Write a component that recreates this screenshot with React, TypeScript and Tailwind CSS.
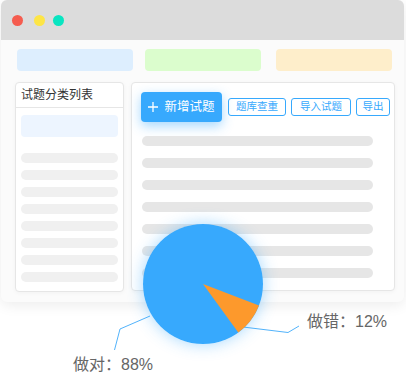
import React from "react";

const font = { fontFamily: '"Liberation Sans", "Noto Sans CJK SC", sans-serif' };

export default function App() {
  const leftBars = [0, 1, 2, 3, 4, 5, 6, 7];
  const rightBars = [0, 1, 2, 3, 4, 5, 6];
  return (
    <div className="relative w-[406px] h-[374px] bg-white overflow-hidden" style={font}>
      <div className="ml-[1px] w-[403px] h-[302px] rounded-[6px] bg-[#fbfbfb] shadow-[0_3px_14px_rgba(0,0,0,0.08)] overflow-hidden flex flex-col">
        <div className="h-[40px] bg-[#dcdcdc] flex items-center shrink-0">
          <div className="ml-[11px] w-[11px] h-[11px] rounded-full bg-[#f55c4f]" />
          <div className="ml-[11px] w-[11px] h-[11px] rounded-full bg-[#fde546]" />
          <div className="ml-[8px] w-[11px] h-[11px] rounded-full bg-[#09e5c1]" />
        </div>
        <div className="pl-[16px] pt-[9px] flex">
          <div className="w-[116px] h-[22px] rounded-[4px] bg-[#ddeefe]" />
          <div className="ml-[12px] w-[116px] h-[22px] rounded-[4px] bg-[#dbfdcd]" />
          <div className="ml-[15px] w-[116px] h-[22px] rounded-[4px] bg-[#feeecb]" />
        </div>
        <div className="pl-[14px] mt-[11px] flex gap-[7px]">
          <div className="w-[109px] h-[210px] rounded-[4px] border border-[#e6e6e6] bg-white shadow-[0_1px_4px_rgba(0,0,0,0.04)] flex flex-col">
            <div className="h-[25px] border-b border-[#e6e6e6] flex items-center pl-[5px] text-[12px] text-[#333]">
              试题分类列表
            </div>
            <div className="px-[5px] pt-[7px] flex flex-col">
              <div className="h-[22px] rounded-[4px] bg-[#edf5ff]" />
              <div className="mt-[16px] flex flex-col gap-[7px]">
                {leftBars.map((i) => (
                  <div key={i} className="h-[10px] rounded-full bg-[#f0f0f0]" />
                ))}
              </div>
            </div>
          </div>
          <div className="w-[264px] h-[209px] rounded-[4px] border border-[#e6e6e6] bg-white shadow-[0_1px_4px_rgba(0,0,0,0.04)] pl-[9px] pt-[9px]">
            <div className="flex items-center">
              <div className="w-[81px] h-[30px] rounded-[4px] bg-[#37a9fd] shadow-[0_4px_12px_rgba(55,169,253,0.45)] flex items-center justify-center gap-[6px] text-white text-[12.5px]">
                <svg width="10" height="10" viewBox="0 0 10 10">
                  <path d="M5 0V10M0 5H10" stroke="white" strokeWidth="1.3" />
                </svg>
                <span>新增试题</span>
              </div>
              <div className="ml-[6px] w-[58px] h-[18px] rounded-[3px] border border-[#37a9fd] text-[#37a9fd] text-[10.5px] flex items-center justify-center">
                题库查重
              </div>
              <div className="ml-[5px] w-[60px] h-[18px] rounded-[3px] border border-[#37a9fd] text-[#37a9fd] text-[10.5px] flex items-center justify-center">
                导入试题
              </div>
              <div className="ml-[5px] w-[34px] h-[18px] rounded-[3px] border border-[#37a9fd] text-[#37a9fd] text-[10.5px] flex items-center justify-center">
                导出
              </div>
            </div>
            <div className="mt-[14px] ml-[1px] w-[231px] flex flex-col gap-[12px]">
              {rightBars.map((i) => (
                <div key={i} className="h-[10px] rounded-full bg-[#e6e6e6]" />
              ))}
            </div>
          </div>
        </div>
      </div>

      <svg className="absolute left-0 top-0" width="406" height="374">
        <polyline points="150,316 120,329 114.5,350" fill="none" stroke="#52b3fb" strokeWidth="1" />
        <polyline points="243,327 288,332.5 299,326" fill="none" stroke="#52b3fb" strokeWidth="1" />
      </svg>

      <div className="absolute left-[143px] top-[224px] w-[120px] h-[120px] rounded-full shadow-[0_0_16px_rgba(55,169,253,0.45)]">
        <svg width="120" height="120" viewBox="0 0 120 120">
          <circle cx="60" cy="60" r="60" fill="#37a9fd" />
          <path d="M60 60 L116.01 81.5 A60 60 0 0 1 95.27 108.54 Z" fill="#fd992c" />
        </svg>
      </div>

      <div className="absolute left-[307px] top-[311px] text-[16px] leading-[22px] text-[#666]">
        做错：12%
      </div>
      <div className="absolute left-[73px] top-[354px] text-[16px] leading-[22px] text-[#666]">
        做对：88%
      </div>
    </div>
  );
}
